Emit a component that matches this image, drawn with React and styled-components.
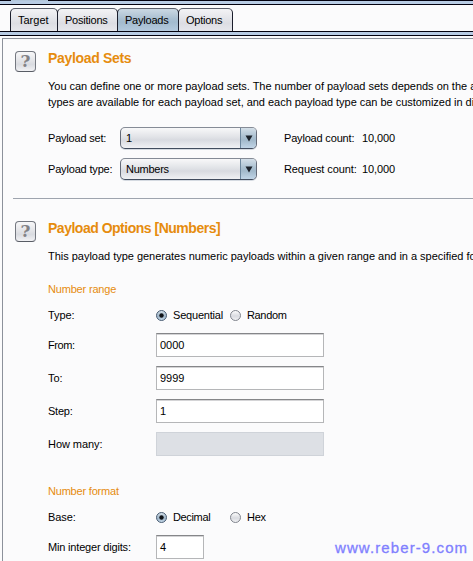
import React from "react";
import styled, { createGlobalStyle } from "styled-components";

const GlobalStyle = createGlobalStyle`
  html, body { margin: 0; padding: 0; overflow: hidden; }
  body { background: #fbfbfc; font: 11px/16px "Liberation Sans", Arial, sans-serif; color: #000; }
  * { box-sizing: border-box; }
`;

const Window = styled.div`
  width: 473px;
  height: 561px;
  overflow: hidden;
  display: flex;
  flex-direction: column;
  white-space: nowrap;
`;
const OuterTabEdge = styled.div`
  flex: none;
  height: 5px;
  background: linear-gradient(90deg, #03020f 11px, #b2c6da 11px 48px, #03020f 48px) 0 0 / 100% 1px no-repeat, #b8cce4;
  border-bottom: 1px solid #03020f;
`;
const TabBar = styled.nav`
  flex: none;
  height: 26px;
  padding: 3px 0 0 10px;
  display: flex;
`;
const Tab = styled.div`
  width: ${(p) => p.$width}px;
  height: 23px;
  margin-right: -1px;
  padding: 3px 0 0 7px;
  border: 1px solid #1b1e2c;
  border-top-color: #5a5f6b;
  border-bottom: 0;
  border-radius: 5px 5px 0 0;
  background: ${(p) =>
    p.$active
      ? "linear-gradient(#cbd8e3, #a9bfd1 45%, #a3bbce 60%, #b4cade)"
      : "linear-gradient(#f3f3f5, #e3e4e9 45%, #dcdde3 65%, #e6e7ec)"};
`;
const TabEdge = styled.div`
  flex: none;
  height: 5px;
  background: #b8cce4;
  border: solid #03020f;
  border-width: 1px 0;
`;
const Panel = styled.main`
  flex: 1;
  margin: 2px 0 0 2px;
  border: solid #8c919b;
  border-width: 1px 0 0 1px;
`;
const Section = styled.section`
  display: grid;
  grid-template-columns: 33px 1fr;
  padding: 11px 0 0 12px;
  ${(p) => p.$first && "height: 159px;"}
  ${(p) => p.$second && "padding-top: 21px;"}
`;
const Divider = styled.div`
  height: 1px;
  margin-left: 10px;
  background: #9ea4ae;
`;
const HelpBox = styled.div`
  width: 21px;
  height: 21px;
  margin-top: 1px;
  border: 1px solid #747880;
  border-bottom-color: #585c65;
  border-radius: 4px;
  background: linear-gradient(#f8f8f9, #e1e2e6 50%, #d9dbe0 65%, #f2f2f5);
  color: #828286;
  font: bold 17px/19px "DejaVu Serif", serif;
  text-align: center;
`;
const Heading = styled.h2`
  margin: 0;
  font-size: 14px;
  line-height: 16px;
  letter-spacing: ${(p) => p.$track || 0}px;
  color: #e68c0e;
`;
const Text = styled.span`
  display: block;
  letter-spacing: ${(p) => p.$track || 0}px;
`;
const Description = styled(Text)`
  margin-top: ${(p) => p.$gap}px;
`;
const Subheading = styled(Text)`
  margin-top: ${(p) => p.$gap}px;
  color: #e68c0e;
`;
const PayloadGrid = styled.div`
  display: grid;
  grid-template-columns: 72px 164px 78px 1fr;
  grid-auto-rows: 23px;
  row-gap: 8px;
  margin-top: 17px;
  line-height: 22px;
`;
const Select = styled.div`
  width: 137px;
  height: 22px;
  display: flex;
  justify-content: space-between;
  border: 1px solid #656b78;
  border-top-color: #858b96;
  border-bottom-color: #414c5e;
  border-radius: 5px;
  overflow: hidden;
  background: linear-gradient(#f8f8f9, #e1e3e7 45%, #d8dae0 60%, #f0f1f4);
  box-shadow: 0 1px 0 #d5dae1;
  padding-left: 5px;
  line-height: 20px;
`;
const SelectArrow = styled.span`
  width: 16px;
  height: 20px;
  border-left: 1px solid #6d879e;
  background: linear-gradient(#d4dfe8, #a9bfd0 45%, #a2b9cb 60%, #c1d5e7);
  svg { display: block; }
`;
const Form = styled.div`
  display: flex;
  flex-direction: column;
`;
const FormRow = styled.div`
  height: ${(p) => p.$height || 24}px;
  margin-top: ${(p) => p.$gap || 9}px;
  display: grid;
  grid-template-columns: 108px 1fr;
  align-items: center;
`;
const Field = styled.div`
  width: ${(p) => p.$width || 168}px;
  height: 24px;
  padding: 3px 0 0 3px;
  border: 1px solid #b5b6b8;
  border-top: 1px solid #858689;
  box-shadow: inset 0 1px 0 #d4d4d6;
  background: #fff;
  ${(p) => p.$disabled && `
    background: #dde0e5;
    border-color: #cfd3d9;
    box-shadow: none;
  `}
`;
const RadioGroup = styled.div`
  display: grid;
  grid-template-columns: 74px 1fr;
`;
const Choice = styled.div`
  display: flex;
  align-items: center;
  gap: 6px;
  svg { flex: none; }
`;
const Watermark = styled.div`
  position: absolute;
  left: 335px;
  top: 540px;
  font: 15px/16px "Liberation Sans", Arial, sans-serif;
  letter-spacing: 1.1px;
  color: #8080ff;
  -webkit-text-stroke: 0.3px #8080ff;
`;

function Radio({ on }) {
  const id = on ? "radioOn" : "radioOff";
  return (
    <svg width="11" height="12" viewBox="0 0 11 12">
      <defs>
        <linearGradient id={id} x2="0" y2="1">
          <stop stopColor={on ? "#d9e4ec" : "#ffffff"} />
          <stop offset=".55" stopColor={on ? "#9fb5c8" : "#d9dbe0"} />
          <stop offset="1" stopColor={on ? "#c6d9e9" : "#f3f4f6"} />
        </linearGradient>
      </defs>
      <circle cx="5.5" cy="6.5" r="5" fill={`url(#${id})`} stroke={on ? "#4a5d73" : "#80848d"} />
      {on && <circle cx="5.5" cy="6.5" r="2.2" fill="#101318" />}
    </svg>
  );
}

function Combo({ value, track }) {
  return (
    <Select>
      <Text $track={track}>{value}</Text>
      <SelectArrow>
        <svg width="15" height="20"><path d="M4.5 7.5h7L8 13.5z" fill="#1c222b" /></svg>
      </SelectArrow>
    </Select>
  );
}

export default function App() {
  return (
    <Window>
      <GlobalStyle />
      <OuterTabEdge />
      <TabBar>
        <Tab $width={48}><Text>Target</Text></Tab>
        <Tab $width={61}><Text $track={-0.22}>Positions</Text></Tab>
        <Tab $width={62} $active><Text $track={-0.22}>Payloads</Text></Tab>
        <Tab $width={55}><Text $track={-0.25}>Options</Text></Tab>
      </TabBar>
      <TabEdge />
      <Panel>
        <Section $first>
          <HelpBox>?</HelpBox>
          <div>
            <Heading $track={-0.33}>Payload Sets</Heading>
            <Description $gap={12} $track={-0.02}>You can define one or more payload sets. The number of payload sets depends on the a</Description>
            <Description $gap={0} $track={-0.03}>types are available for each payload set, and each payload type can be customized in di</Description>
            <PayloadGrid>
              <Text $track={-0.2}>Payload set:</Text>
              <Combo value="1" />
              <Text $track={-0.18}>Payload count:</Text>
              <Text $track={-0.1}>10,000</Text>
              <Text $track={-0.17}>Payload type:</Text>
              <Combo value="Numbers" track={-0.25} />
              <Text $track={-0.1}>Request count:</Text>
              <Text $track={-0.1}>10,000</Text>
            </PayloadGrid>
          </div>
        </Section>
        <Divider />
        <Section $second>
          <HelpBox>?</HelpBox>
          <Form>
            <Heading $track={-0.49}>Payload Options [Numbers]</Heading>
            <Description $gap={12} $track={-0.02}>This payload type generates numeric payloads within a given range and in a specified fo</Description>
            <Subheading $gap={17} $track={-0.18}>Number range</Subheading>
            <FormRow $height={16} $gap={10}>
              <Text $track={-0.1}>Type:</Text>
              <RadioGroup>
                <Choice><Radio on /><Text $track={-0.2}>Sequential</Text></Choice>
                <Choice><Radio /><Text $track={-0.35}>Random</Text></Choice>
              </RadioGroup>
            </FormRow>
            <FormRow $gap={10}><Text $track={-0.4}>From:</Text><Field><Text>0000</Text></Field></FormRow>
            <FormRow><Text>To:</Text><Field><Text>9999</Text></Field></FormRow>
            <FormRow><Text $track={-0.25}>Step:</Text><Field><Text>1</Text></Field></FormRow>
            <FormRow><Text $track={-0.05}>How many:</Text><Field $disabled /></FormRow>
            <Subheading $gap={27} $track={-0.2}>Number format</Subheading>
            <FormRow $height={16} $gap={10}>
              <Text $track={-0.1}>Base:</Text>
              <RadioGroup>
                <Choice><Radio on /><Text $track={-0.35}>Decimal</Text></Choice>
                <Choice><Radio /><Text $track={-0.25}>Hex</Text></Choice>
              </RadioGroup>
            </FormRow>
            <FormRow $gap={10}><Text $track={-0.18}>Min integer digits:</Text><Field $width={48}><Text>4</Text></Field></FormRow>
          </Form>
        </Section>
      </Panel>
      <Watermark>www.reber-9.com</Watermark>
    </Window>
  );
}
